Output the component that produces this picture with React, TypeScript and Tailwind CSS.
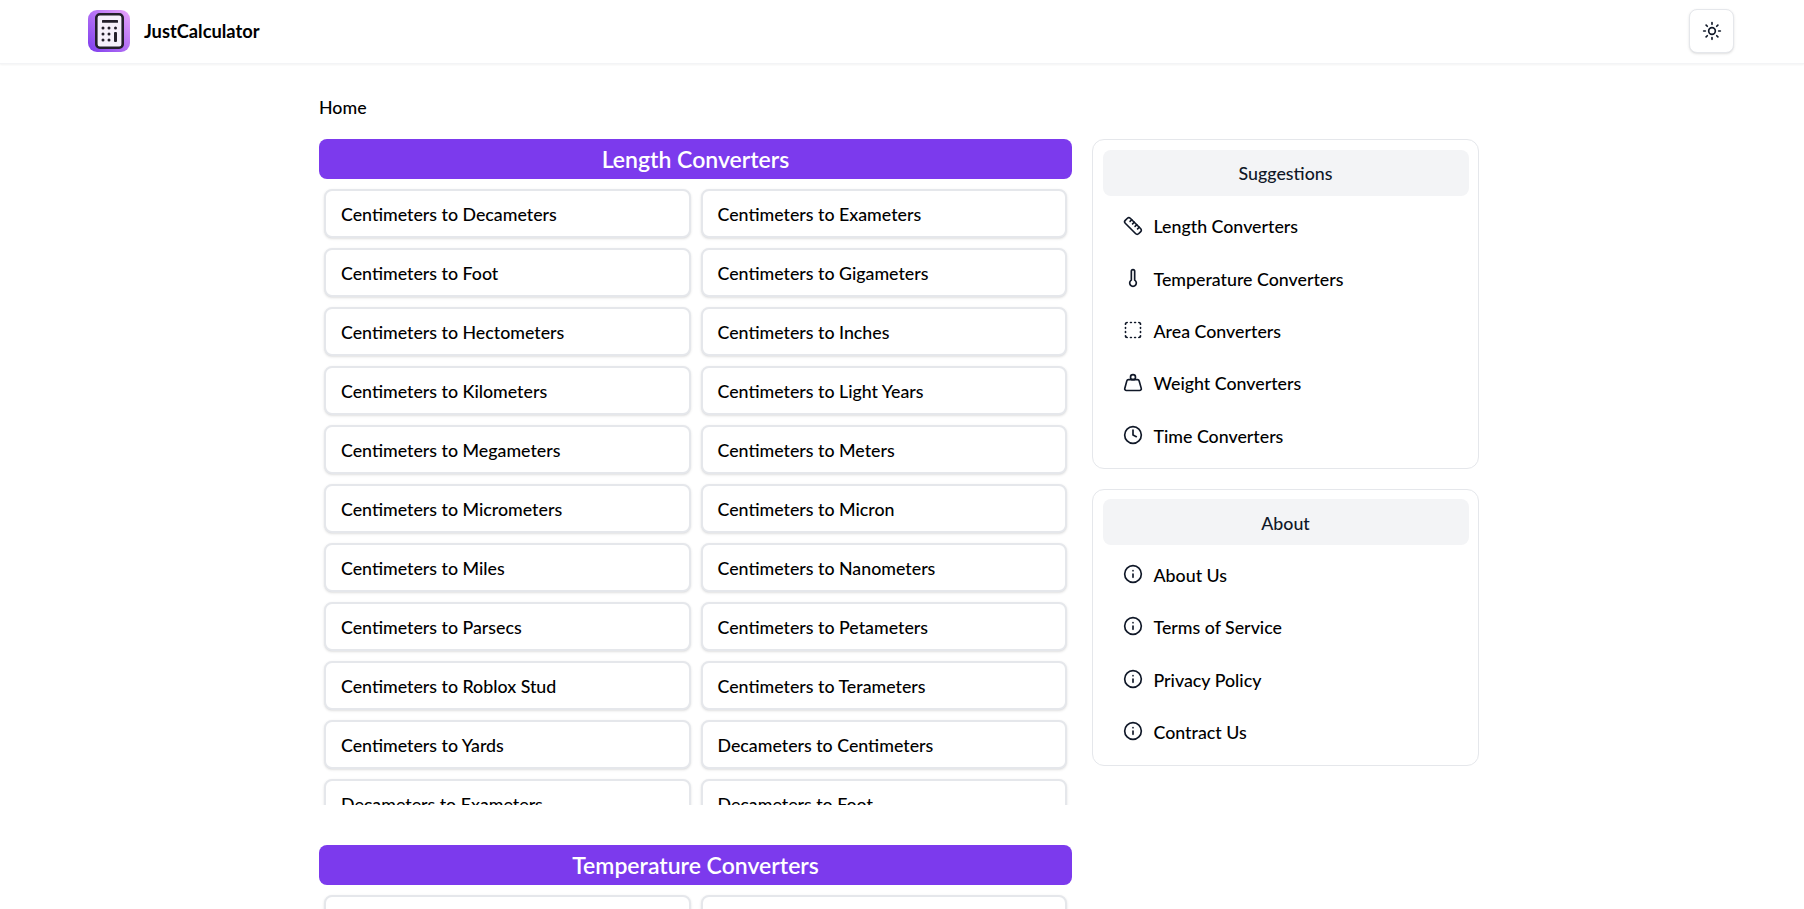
import { Ruler, Thermometer, SquareDashed, Weight, Clock, Info, Sun } from "lucide-react";

const length = [
  "Centimeters to Decameters","Centimeters to Exameters","Centimeters to Foot","Centimeters to Gigameters",
  "Centimeters to Hectometers","Centimeters to Inches","Centimeters to Kilometers","Centimeters to Light Years",
  "Centimeters to Megameters","Centimeters to Meters","Centimeters to Micrometers","Centimeters to Micron",
  "Centimeters to Miles","Centimeters to Nanometers","Centimeters to Parsecs","Centimeters to Petameters",
  "Centimeters to Roblox Stud","Centimeters to Terameters","Centimeters to Yards","Decameters to Centimeters",
  "Decameters to Exameters","Decameters to Foot","Decameters to Gigameters","Decameters to Hectometers",
];
const temperature = ["Celsius to Fahrenheit","Celsius to Kelvin"];
const suggestions = [
  { icon: Ruler, label: "Length Converters" },
  { icon: Thermometer, label: "Temperature Converters" },
  { icon: SquareDashed, label: "Area Converters" },
  { icon: Weight, label: "Weight Converters" },
  { icon: Clock, label: "Time Converters" },
];
const about = [
  { icon: Info, label: "About Us" },
  { icon: Info, label: "Terms of Service" },
  { icon: Info, label: "Privacy Policy" },
  { icon: Info, label: "Contract Us" },
];

function Logo() {
  return (
    <svg width="42" height="42" viewBox="0 0 42 42" className="shrink-0">
      <defs>
        <linearGradient id="lg" x1="0" y1="1" x2="1" y2="0">
          <stop offset="0" stopColor="#7c3aed" />
          <stop offset="1" stopColor="#e9a5fb" />
        </linearGradient>
      </defs>
      <rect width="42" height="42" rx="9" fill="url(#lg)" />
      <rect x="8.3" y="4.3" width="26.4" height="33.4" rx="3.5" fill="#f5f0fb" stroke="#231f2b" strokeWidth="2.6" />
      <rect x="14" y="10" width="16" height="2.8" rx="0.5" fill="#231f2b" />
      {[15, 21, 27.5].map((x) =>
        [18, 24, 30].map((y) =>
          x === 27.5 && y > 18 ? null : <circle key={`${x}-${y}`} cx={x} cy={y} r="1.5" fill="#231f2b" />
        )
      )}
      <rect x="26" y="22" width="3" height="10" rx="1" fill="#231f2b" />
    </svg>
  );
}

function Section({ title, items, clip }: { title: string; items: string[]; clip?: boolean }) {
  return (
    <section>
      <h2 className="h-10 rounded-lg bg-[#7c3aed] text-center text-[23px] leading-10 font-semibold text-white">{title}</h2>
      <div className={clip ? "h-[626px] overflow-hidden" : ""}>
        <div className="grid grid-cols-2 gap-[10px] px-[5px] py-[10px]">
          {items.map((t) => (
            <a key={t} className="flex h-[49px] items-center rounded-lg border-2 border-gray-200 bg-white px-[15px] pt-[1px] text-[17.8px] font-medium text-black shadow-sm">{t}</a>
          ))}
        </div>
      </div>
    </section>
  );
}

function SideCard({ title, items, shift }: { title: string; items: { icon: typeof Info; label: string }[]; shift: string }) {
  return (
    <div className="rounded-xl border border-gray-200 bg-white p-[9.5px]">
      <div className="flex h-[46px] items-center justify-center rounded-lg bg-gray-100 pt-[2px] text-[17.8px] font-medium text-gray-900">{title}</div>
      <ul className={`flex flex-col gap-[10.4px] ${shift}`}>
        {items.map(({ icon: Icon, label }) => (
          <li key={label} className="flex h-[42px] items-center gap-[10.5px] pl-[20.5px] text-[17.8px] font-medium text-black">
            <Icon size={20} strokeWidth={2} className="-mt-[2px] shrink-0 text-gray-900" />
            <span>{label}</span>
          </li>
        ))}
      </ul>
    </div>
  );
}

export default function App() {
  return (
    <div className="h-screen overflow-hidden bg-white font-['Lato','Noto_Sans',sans-serif] text-black">
      <header className="flex h-16 items-center justify-between border-b border-gray-100 pl-[88px] pr-[70px] pb-[1px] shadow-[0_1px_2px_rgba(0,0,0,0.05)]">
        <div className="flex items-center gap-[14px]">
          <Logo />
          <span className="mt-[1px] text-[18.3px] font-bold">JustCalculator</span>
        </div>
        <button className="flex h-11 w-[45px] items-center justify-center rounded-lg border border-gray-200 bg-white shadow-sm">
          <Sun size={20} className="text-gray-900" />
        </button>
      </header>
      <main className="mx-auto w-[1166px] pt-[29px]">
        <div className="h-[46px] text-[17.8px] font-medium leading-7">Home</div>
        <div className="flex items-start gap-5">
          <div className="flex w-[753px] flex-col gap-10">
            <Section title="Length Converters" items={length} clip />
            <Section title="Temperature Converters" items={temperature} />
          </div>
          <aside className="flex w-[387px] flex-col gap-5">
            <SideCard title="Suggestions" items={suggestions} shift="pt-[10px] pb-[1px]" />
            <SideCard title="About" items={about} shift="pt-[9px] pb-[2px]" />
          </aside>
        </div>
      </main>
    </div>
  );
}
